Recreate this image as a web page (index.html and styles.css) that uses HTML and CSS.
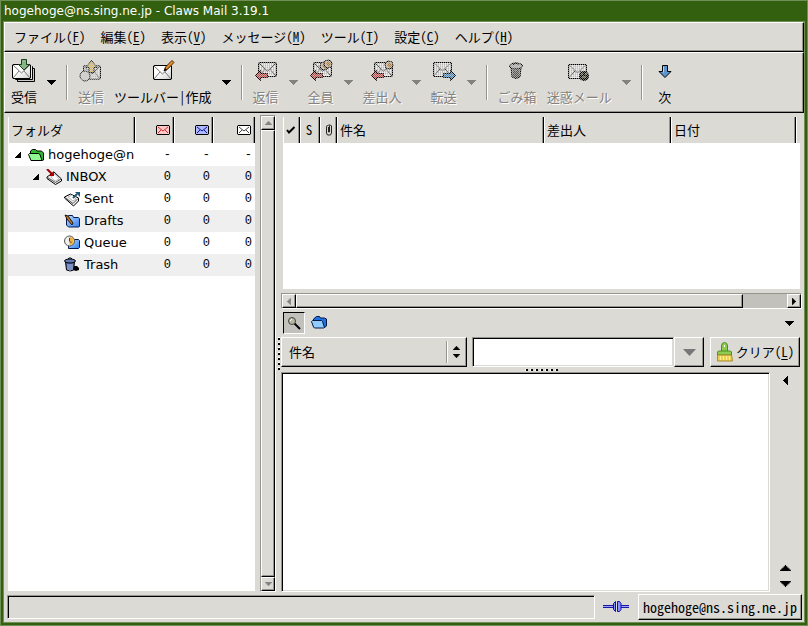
FILE: index.html
```
<!DOCTYPE html>
<html lang="ja">
<head>
    <meta charset="UTF-8">
    <meta name="viewport" content="width=device-width, initial-scale=1.0">
    <title>Claws Mail 3.19.1</title>
    <link rel="stylesheet" href="styles.css">
</head>
<body>
    <!-- shared icons -->
    <svg class="defs" aria-hidden="true">
        <defs>
            <pattern id="dots" width="2" height="2" patternUnits="userSpaceOnUse">
                <rect width="1" height="1" fill="#dcdad5"/><rect x="1" y="1" width="1" height="1" fill="#dcdad5"/>
            </pattern>
            <linearGradient id="paper" x2="1" y2="1"><stop offset=".4" stop-color="#fff"/><stop offset="1" stop-color="#ccc"/></linearGradient>
            <linearGradient id="blue" x2="1" y2="1"><stop offset="0" stop-color="#b8dcff"/><stop offset="1" stop-color="#3080f0"/></linearGradient>
        </defs>
        <symbol id="down" viewBox="0 0 9 5"><path d="M0 0h9v1h-1v1h-1v1h-1v1h-1v1h-1v-1h-1v-1h-1v-1h-1v-1h-1z" fill="currentColor"/></symbol>
        <symbol id="left" viewBox="0 0 5 9"><path d="M5 0v9h-1v-1h-1v-1h-1v-1h-1v-1h-1v-1h1v-1h1v-1h1v-1h1v-1z" fill="currentColor"/></symbol>
        <symbol id="envelope" viewBox="0 0 19 15">
            <path d="M1 .5h17l.5.5v13l-.5.5h-17l-.5-.5v-13z" fill="url(#paper)" stroke="#000"/>
            <path d="M1 1l8.500 8 8.500-8M1 14l6-7M18 14l-6-7" fill="none" stroke="#777"/>
        </symbol>
        <symbol id="envelope-off" viewBox="0 0 19 15">
            <path d="M1 .5h17l.5.5v13l-.5.5h-17l-.5-.5v-13z" fill="#eee" stroke="#000"/>
            <path d="M1 1l8.500 8 8.500-8M1 14l6-7M18 14l-6-7" fill="none" stroke="#333"/>
            <path d="M1 2h17M1 4h17M1 6h17M1 8h17M1 10h17M1 12h17" stroke="#888" stroke-dasharray="1 1"/>
        </symbol>
        <symbol id="mini" viewBox="0 0 14 10">
            <path d="M1 .5h12l.5.5v8l-.5.5h-12l-.5-.5v-8z" fill="currentColor" stroke="#000"/>
            <path d="M2 2l5 4 5-4M2 8l3-3M12 8l-3-3" fill="none" stroke="var(--line)"/>
        </symbol>
        <symbol id="expand" viewBox="0 0 6 6"><path d="M5 0h1v6h-6v-1h1v-1h1v-1h1v-1h1v-1h1z"/></symbol>
        <symbol id="person" viewBox="0 0 10 10">
            <circle cx="5" cy="5" r="4" fill="#c8b8a8" stroke="#000"/><path d="M3 5l2-3 3 3-2 3z" fill="#b07838"/>
        </symbol>
        <symbol id="reply" viewBox="0 0 13 11">
            <path d="M.5 5.500l5-5v3h7v4h-7v3z" fill="#b85050" stroke="#200"/>
        </symbol>
    </svg>

    <div class="window">
        <div class="titlebar">hogehoge@ns.sing.ne.jp - Claws Mail 3.19.1</div>
        <div class="client">
            <nav class="menubar">
                <button>ファイル(<u>F</u>)</button>
                <button>編集(<u>E</u>)</button>
                <button>表示(<u>V</u>)</button>
                <button>メッセージ(<u>M</u>)</button>
                <button>ツール(<u>T</u>)</button>
                <button>設定(<u>C</u>)</button>
                <button>ヘルプ(<u>H</u>)</button>
            </nav>

            <div class="toolbar">
                <button class="tool">
                    <svg viewBox="0 0 24 24">
                        <path d="M8 9.500h14.500v13h-17v-3" fill="#ccc" stroke="#000"/>
                        <path d="M20 7.500h.500v13h-17v-2" fill="#eee" stroke="#000"/>
                        <use href="#envelope" x="0" y="5" width="19" height="15"/>
                        <path d="M9.500.500h5v5h3l-5.500 5.500-5.500-5.500h3z" fill="#86b586" stroke="#1c3c1c"/>
                    </svg>受信
                </button>
                <button class="arrow" aria-label="受信メニュー"><svg><use href="#down"/></svg></button>
                <span class="sep"></span>
                <button class="tool" disabled>
                    <svg viewBox="0 0 24 24">
                        <use href="#envelope-off" x="4" y="6" width="18" height="15"/>
                        <circle cx="6" cy="17" r="5" fill="#ccc" stroke="#222"/>
                        <path d="M7 8.500l5.500-7 5.500 7h-3v5h-5v-5z" fill="#d0b870" stroke="#222"/>
                        <rect class="fade" width="24" height="24" fill="url(#dots)"/>
                    </svg>送信
                </button>
                <button class="tool">
                    <svg viewBox="0 0 24 24">
                        <use href="#envelope" x="2" y="6" width="19" height="15"/>
                        <path d="M13 12l1.500-4 6.500-6.500 2 2-6.500 6.500z" fill="#e09030" stroke="#4a2400"/>
                        <path d="M13 12l3-1-2-2z" fill="#000"/>
                    </svg>ツールバー|作成
                </button>
                <button class="arrow" aria-label="作成メニュー"><svg><use href="#down"/></svg></button>
                <span class="sep"></span>
                <button class="tool" disabled>
                    <svg viewBox="0 0 24 24">
                        <use href="#envelope-off" x="4" y="3" width="19" height="15"/>
                        <use href="#reply" x="1" y="11" width="13" height="11"/>
                        <rect class="fade" width="24" height="24" fill="url(#dots)"/>
                    </svg>返信
                </button>
                <button class="arrow" aria-label="返信メニュー" disabled><svg><use href="#down"/></svg></button>
                <button class="tool" disabled>
                    <svg viewBox="0 0 24 24">
                        <use href="#envelope-off" x="4" y="3" width="19" height="15"/>
                        <use href="#person" x="10" y="2" width="10" height="10"/>
                        <use href="#person" x="14" y="0" width="10" height="10"/>
                        <use href="#reply" x="1" y="11" width="13" height="11"/>
                        <rect class="fade" width="24" height="24" fill="url(#dots)"/>
                    </svg>全員
                </button>
                <button class="arrow" aria-label="全員メニュー" disabled><svg><use href="#down"/></svg></button>
                <button class="tool" disabled>
                    <svg viewBox="0 0 24 24">
                        <use href="#envelope-off" x="4" y="3" width="19" height="15"/>
                        <use href="#person" x="14" y="1" width="10" height="10"/>
                        <use href="#reply" x="1" y="11" width="13" height="11"/>
                        <rect class="fade" width="24" height="24" fill="url(#dots)"/>
                    </svg>差出人
                </button>
                <button class="arrow" aria-label="差出人メニュー" disabled><svg><use href="#down"/></svg></button>
                <button class="tool" disabled>
                    <svg viewBox="0 0 24 24">
                        <use href="#envelope-off" x="1" y="3" width="19" height="15"/>
                        <path d="M23.500 16.500l-5-5v3h-7v4h7v3z" fill="#5088b8" stroke="#012"/>
                        <rect class="fade" width="24" height="24" fill="url(#dots)"/>
                    </svg>転送
                </button>
                <button class="arrow" aria-label="転送メニュー" disabled><svg><use href="#down"/></svg></button>
                <span class="sep"></span>
                <button class="tool" disabled>
                    <svg viewBox="0 0 24 24">
                        <path d="M6 8l1 10q4 3 8 0l1-10z" fill="#888" stroke="#000"/>
                        <path d="M9 11v7M11 12v7M13 11v7" stroke="#222"/>
                        <ellipse cx="11" cy="7" rx="6.500" ry="3" fill="#aaa" stroke="#000"/>
                        <path d="M8 5.500q3-3 6 0" fill="none" stroke="#000"/>
                        <rect class="fade" width="24" height="24" fill="url(#dots)"/>
                    </svg>ごみ箱
                </button>
                <button class="tool" disabled>
                    <svg viewBox="0 0 24 24">
                        <use href="#envelope-off" x="1" y="5" width="19" height="15"/>
                        <circle cx="17" cy="17" r="5" fill="#000"/>
                        <path d="M14 15h2M18 15h2M15 18h4" stroke="#bb6"/>
                        <rect class="fade" width="24" height="24" fill="url(#dots)"/>
                    </svg>迷惑メール
                </button>
                <button class="arrow" aria-label="迷惑メールメニュー" disabled><svg><use href="#down"/></svg></button>
                <span class="sep"></span>
                <button class="tool">
                    <svg viewBox="0 0 24 24">
                        <path d="M9.500 6.500h5v6h3.500l-6 6-6-6h3.500z" fill="#5c94cc" stroke="#000"/>
                        <path d="M10.500 7.500v6" stroke="#b4d4f0"/>
                    </svg>次
                </button>
            </div>

            <main class="panes">
                <section class="folders">
                    <div class="folder-list">
                        <table>
                            <colgroup><col><col class="count"><col class="count"><col class="total"></colgroup>
                            <thead>
                                <tr>
                                    <th>フォルダ</th>
                                    <th><svg class="mini new"><use href="#mini"/></svg></th>
                                    <th><svg class="mini unread"><use href="#mini"/></svg></th>
                                    <th><svg class="mini all"><use href="#mini"/></svg></th>
                                </tr>
                            </thead>
                            <tbody>
                                <tr>
                                    <td><div class="node">
                                        <svg class="expander"><use href="#expand"/></svg>
                                        <svg class="icon" viewBox="0 0 16 16"><path d="M2.500 7v-3l2-1.500h3l1.500 1.500h4.500l2 2v7l-1 .5h-11z" fill="#30b830" stroke="#000"/><path d="M.500 7.500l1-1h9l1.500 1 2 6h-11z" fill="#90f890" stroke="#000"/></svg>
                                        <span>hogehoge@n</span></div></td>
                                    <td>-</td><td>-</td><td>-</td>
                                </tr>
                                <tr>
                                    <td><div class="node level1">
                                        <svg class="expander"><use href="#expand"/></svg>
                                        <svg class="icon" viewBox="0 0 16 16"><path d="M1 8l7-5 7.500 7v2l-6 3.500-8.500-6z" fill="#eee" stroke="#000"/><path d="M1.500 8.500l8 5 5.500-3.500" fill="none" stroke="#555"/><path d="M5 8l4-3 4 5-4 2z" fill="#fff" stroke="#bbb"/><path d="M1 0l5 5" stroke="#a00000" stroke-width="2"/><path d="M8 2v5h-5z" fill="#b00000"/></svg>
                                        <span>INBOX</span></div></td>
                                    <td>0</td><td>0</td><td>0</td>
                                </tr>
                                <tr>
                                    <td><div class="node level2">
                                        <svg class="icon" viewBox="0 0 16 16"><path d="M.500 6l6-3 8 4v3l-5 5-9-8z" fill="#eee" stroke="#000"/><path d="M1 6.500l8 6 5-5" fill="none" stroke="#555"/><path d="M4 6l4-2 4 4-3 2z" fill="#fff" stroke="#bbb"/><path d="M9 7l4-4" stroke="#205878" stroke-width="2"/><path d="M11 1h5v5z" fill="#205878"/></svg>
                                        <span>Sent</span></div></td>
                                    <td>0</td><td>0</td><td>0</td>
                                </tr>
                                <tr>
                                    <td><div class="node level2">
                                        <svg class="icon" viewBox="0 0 16 16"><path d="M2.500 4.500l2-2h4l1 2h5l1 1v8l-1 .5h-10l-2-2z" fill="url(#blue)" stroke="#001850"/><path d="M1 2l3 1 5 7-1 2-5-6z" fill="#c87830" stroke="#201000"/></svg>
                                        <span>Drafts</span></div></td>
                                    <td>0</td><td>0</td><td>0</td>
                                </tr>
                                <tr>
                                    <td><div class="node level2">
                                        <svg class="icon" viewBox="0 0 16 16"><path d="M4.500 4.500h10l1 1v7l-1 1h-10z" fill="url(#blue)" stroke="#001850"/><circle cx="5.500" cy="6" r="5" fill="#eee" stroke="#555"/><path d="M5.500 2a4 4 0 0 1 0 8z" fill="#f0b040"/><path d="M5.500 3v3l2 2" fill="none" stroke="#444"/></svg>
                                        <span>Queue</span></div></td>
                                    <td>0</td><td>0</td><td>0</td>
                                </tr>
                                <tr>
                                    <td><div class="node level2">
                                        <svg class="icon" viewBox="0 0 16 16"><path d="M9 13l1-4h3l2 2v2l-3 1z"/><path d="M1.500 5l1 8q4 2 7 0l1-8z" fill="#5068a8" stroke="#000"/><path d="M4 7v6M6 7v7M8 7v6" stroke="#a8b8e0"/><ellipse cx="6" cy="4" rx="5.500" ry="2" fill="#6078b0" stroke="#000"/><path d="M4 2l1-1h2l1 1" fill="none" stroke="#000"/></svg>
                                        <span>Trash</span></div></td>
                                    <td>0</td><td>0</td><td>0</td>
                                </tr>
                            </tbody>
                        </table>
                    </div>
                    <div class="scrollbar vertical">
                        <button aria-label="上へ" disabled><svg class="up"><use href="#down"/></svg></button>
                        <div class="thumb"></div>
                        <button aria-label="下へ" disabled><svg><use href="#down"/></svg></button>
                    </div>
                </section>

                <div class="grip"></div>

                <section class="messages">
                    <div class="message-list">
                        <table>
                            <colgroup><col class="mark"><col class="status"><col class="attach"><col><col class="from"><col class="date"><col class="rest"></colgroup>
                            <thead>
                                <tr>
                                    <th><svg class="glyph" viewBox="0 0 10 10"><path d="M1 5l2 2.500 5.500-5.500" fill="none" stroke="#000" stroke-width="2"/></svg></th>
                                    <th class="center">S</th>
                                    <th><svg class="glyph clip" viewBox="0 0 8 12"><path d="M3.500 3v5h1v-6l-1-1h2l1 1v7l-1 2h-3l-1-2v-6l1-2" fill="none" stroke="#222"/></svg></th>
                                    <th>件名</th>
                                    <th>差出人</th>
                                    <th>日付</th>
                                    <th class="end"></th>
                                </tr>
                            </thead>
                        </table>
                    </div>
                    <div class="scrollbar horizontal">
                        <button aria-label="左へ" disabled><svg class="side"><use href="#left"/></svg></button>
                        <div class="thumb"></div>
                        <div class="trough"></div>
                        <button aria-label="右へ"><svg class="side flip"><use href="#left"/></svg></button>
                    </div>

                    <div class="viewbar">
                        <button class="toggle" aria-label="検索">
                            <svg class="icon" viewBox="0 0 16 16"><path d="M8 8l6 6" stroke="#000" stroke-width="2"/><circle cx="6" cy="6" r="3.500" fill="#b8b8a0" stroke="#444"/><path d="M4 6l2-2" stroke="#fff"/></svg>
                        </button>
                        <button class="plain" aria-label="フォルダ">
                            <svg class="icon" viewBox="0 0 16 16"><path d="M2.500 6v-2l3-2.500h3l1 1.500h4l2 1v7l-2 1.500h-9z" fill="#2070e0" stroke="#001840"/><path d="M.500 6.500l1-1h9l1 1 2 6-1 .5h-9l-1-1z" fill="#90ccff" stroke="#001840"/></svg>
                        </button>
                        <button class="plain more" aria-label="メニュー"><svg><use href="#down"/></svg></button>
                    </div>

                    <form class="search">
                        <div class="field">
                            <select aria-label="検索対象"><option>件名</option><option>差出人</option></select>
                            <span class="spin"><svg class="up small"><use href="#down"/></svg><svg class="small"><use href="#down"/></svg></span>
                        </div>
                        <input type="text" aria-label="検索文字列">
                        <button type="button" class="drop" aria-label="履歴" disabled><svg viewBox="0 0 13 7"><path d="M0 0h13l-6.500 7z" fill="#777"/></svg></button>
                        <button type="reset" class="clear">
                            <svg viewBox="0 0 18 20"><path d="M5.500 10v-6q0-3.500 3-3.500t3 3.500v6" fill="#8ccc50" stroke="#508c20"/><path d="M8 3h1v2h-1z" fill="#fff"/><path d="M1.500 13v-3l1-1h12l1 1v3z" fill="#8ccc50" stroke="#508c20"/><path d="M1.500 13h14l1 6h-15z" fill="#ecd050" stroke="#a88c30"/><path d="M4.500 14v4M7.500 14v4M10.500 14v4M13.500 14v4" stroke="#fff098"/></svg>
                            <span>クリア(<u>L</u>)</span>
                        </button>
                    </form>

                    <div class="grip-h"></div>

                    <div class="preview">
                        <textarea aria-label="本文" readonly></textarea>
                        <div class="steps">
                            <button class="plain" aria-label="パネル"><svg class="side"><use href="#left"/></svg></button>
                            <button class="plain prev" aria-label="前"><svg class="up big"><use href="#down"/></svg></button>
                            <button class="plain" aria-label="次"><svg class="big"><use href="#down"/></svg></button>
                        </div>
                    </div>
                </section>
            </main>

            <footer class="statusbar">
                <div class="message"></div>
                <svg class="plug" viewBox="0 0 26 11"><path d="M0 5.500h10M18 5.500h8" stroke="#1818a0" stroke-width="3"/><path d="M0 5.500h10M18 5.500h8" stroke="#a0a0ff"/><path d="M10.500 2.500l2-2v10l-2-2zM14.500.500h2l1.500 2v6l-1.500 2h-2z" fill="#8890ff" stroke="#1010a0"/></svg>
                <button class="account">hogehoge@ns.sing.ne.jp</button>
            </footer>
        </div>
    </div>
</body>
</html>
```
FILE: styles.css
```
* {
    box-sizing: border-box;
}

body {
    margin: 0;
    font-family: "Noto Sans CJK JP", sans-serif;
    font-feature-settings: "hwid";
    font-size: 13px;
    line-height: 20px;
    color: #000;
}

button, select, input, textarea {
    font: inherit;
    font-feature-settings: inherit;
    color: inherit;
    margin: 0;
    padding: 0;
    border: none;
    border-radius: 0;
    background: none;
    outline: none;
}

u {
    text-underline-offset: 2px;
}

svg {
    display: block;
    flex: none;
    width: 9px;
    height: 5px;
}

.defs {
    position: absolute;
    width: 0;
    height: 0;
}

.up {
    transform: rotate(180deg);
}

/* window frame */
.window {
    display: flex;
    flex-direction: column;
    min-height: 100vh;
    padding: 0 2px 2px;
    border: 1px solid #6f8f57;
    background-color: #33600e;
}

.titlebar {
    height: 20px;
    padding-left: 1px;
    font-family: "DejaVu Sans", sans-serif;
    font-size: 12px;
    color: #fff;
}

.client {
    flex: 1;
    display: flex;
    flex-direction: column;
    border: 1px solid #6f8f57;
    background-color: #dcdad5;
}

.menubar, .toolbar {
    display: flex;
    border-style: solid;
    border-width: 1px;
    border-color: #fff #000 #000 #fff;
    box-shadow: inset -1px -1px #96948f;
    padding: 0 1px;
}

.menubar {
    height: 30px;
}

.menubar button {
    padding: 0 7px 0 8px;
    white-space: nowrap;
}

.toolbar {
    height: 61px;
    align-items: center;
}

.tool {
    display: flex;
    flex-direction: column;
    align-items: center;
    gap: 4px;
    padding: 0 5px;
    white-space: nowrap;
}

.tool svg {
    width: 24px;
    height: 24px;
}

.tool:disabled, .arrow:disabled {
    color: #84827e;
    text-shadow: 1px 1px #fff;
}

.fade {
    opacity: .6;
}

.arrow {
    display: flex;
    justify-content: center;
    width: 19px;
}

.sep {
    width: 2px;
    height: 35px;
    margin: 0 5px;
    border-left: 1px solid #96948f;
    border-right: 1px solid #fff;
}

/* main area */
.panes {
    flex: 1;
    display: flex;
    min-height: 0;
    padding: 2px 2px 1px 4px;
}

.folders {
    display: flex;
    gap: 5px;
    width: 268px;
}

.folder-list {
    flex: 1;
    margin: 2px 0 1px;
    background-color: #fff;
}

table {
    width: 100%;
    table-layout: fixed;
    border-collapse: separate;
    border-spacing: 0;
}

th {
    height: 26px;
    padding: 0 3px 0 2px;
    font-weight: normal;
    text-align: left;
    white-space: nowrap;
    background-color: #dcdad5;
    border-left: 1px solid #fff;
    border-right: 1px solid #000;
    box-shadow: inset -1px 0 #96948f;
}

.count {
    width: 39px;
}

.total {
    width: 42px;
}

td {
    height: 22px;
    padding: 0 3px 0 0;
    line-height: 22px;
    text-align: right;
    font-family: "Liberation Mono", monospace;
    font-size: 12px;
}

tbody tr:nth-child(even) {
    background-color: #efefef;
}

tbody tr:first-child td {
    border-top: 1px solid #fff;
    height: 23px;
}

.node {
    display: flex;
    align-items: center;
    gap: 4px;
    padding-left: 7px;
    overflow: hidden;
    font-family: "DejaVu Sans", sans-serif;
    font-size: 13px;
    white-space: nowrap;
}

td:first-child {
    padding: 0;
}

.level1 {
    padding-left: 25px;
}

.level2 {
    padding-left: 56px;
}

.expander {
    width: 6px;
    height: 6px;
    margin-right: 3px;
}

.icon {
    width: 16px;
    height: 16px;
}

.mini {
    width: 14px;
    height: 10px;
    margin-left: auto;
}

.new {
    color: #ffc8c8;
    --line: #d03030;
}

.unread {
    color: #b0b8ff;
    --line: #101890;
}

.all {
    color: #fff;
    --line: #444;
}

.scrollbar {
    display: flex;
    border-style: solid;
    border-width: 1px;
    border-color: #96948f #fff #fff #96948f;
    background-color: #c3c1bc;
}

.scrollbar button, .thumb {
    display: flex;
    align-items: center;
    justify-content: center;
    background-color: #dcdad5;
    border-style: solid;
    border-width: 1px;
    border-color: #fff #000 #000 #fff;
    box-shadow: inset -1px -1px #96948f;
}

.scrollbar button:disabled {
    color: #84827e;
}

.vertical {
    flex-direction: column;
    width: 16px;
}

.vertical button {
    height: 14px;
}

.vertical svg {
    width: 7px;
    height: 4px;
}

.horizontal {
    height: 16px;
    margin-top: 4px;
}

.horizontal button {
    width: 14px;
}

.vertical .thumb {
    flex: 1;
}

.horizontal .thumb {
    flex: 91;
}

.trough {
    flex: 9;
}

.side {
    width: 5px;
    height: 9px;
}

.horizontal .side {
    width: 4px;
    height: 7px;
}

.flip {
    transform: rotate(180deg);
}

/* pane handles */
.grip {
    align-self: center;
    width: 2px;
    height: 34px;
    margin: 0 1px 0 2px;
    background: repeating-linear-gradient(#fff 0 1px, #000 1px 3px, #dcdad5 3px 5px);
}

.grip-h {
    align-self: center;
    width: 34px;
    height: 2px;
    margin: 2px 0 1px;
    background: repeating-linear-gradient(90deg, #fff 0 1px, #000 1px 3px, #dcdad5 3px 5px);
}

/* message list */
.messages {
    flex: 1;
    display: flex;
    flex-direction: column;
    min-width: 0;
    padding-top: 2px;
}

.message-list {
    flex: 44 1 0;
    margin: 0 2px;
    background-color: #fff;
}

.mark, .attach {
    width: 17px;
}

.status {
    width: 20px;
}

.from {
    width: 127px;
}

.date {
    width: 125px;
}

.rest {
    width: 4px;
}

.message-list th {
    padding: 0 2px;
}

.message-list .center {
    padding: 0 2px 0 0;
    text-align: center;
}

.message-list .end {
    border-right: none;
    box-shadow: none;
    padding: 0;
}

.glyph {
    width: 10px;
    height: 10px;
}

.glyph.clip {
    width: 8px;
    height: 12px;
    margin: 0 auto;
}

.viewbar {
    display: flex;
    align-items: center;
    gap: 6px;
    height: 22px;
    margin: 3px 2px;
}

.toggle {
    width: 22px;
    height: 22px;
    padding: 2px;
    border-style: solid;
    border-width: 1px;
    border-color: #000 #fff #fff #000;
    background-color: #c3c1bc;
}

.more {
    margin-left: auto;
    padding-right: 6px;
}

.search {
    display: flex;
    height: 30px;
    margin-right: 2px;
}

.field {
    position: relative;
    width: 186px;
    margin-right: 5px;
}

.search select, .drop, .clear, .account {
    border-style: solid;
    border-width: 1px;
    border-color: #fff #000 #000 #fff;
    box-shadow: inset -1px -1px #96948f;
}

.search select {
    width: 100%;
    height: 30px;
    padding-left: 7px;
    appearance: none;
}

.spin {
    position: absolute;
    top: 4px;
    right: 7px;
    display: flex;
    flex-direction: column;
    justify-content: center;
    gap: 4px;
    height: 22px;
    padding-left: 6px;
    border-left: 1px solid #96948f;
    box-shadow: inset 1px 0 #fff;
    pointer-events: none;
}

.small {
    width: 7px;
    height: 4px;
}

.search input {
    flex: 1;
    min-width: 0;
    padding: 0 4px;
    background-color: #fff;
    border-style: solid;
    border-width: 1px;
    border-color: #96948f #dcdad5 #fff #96948f;
    box-shadow: inset 1px 1px #000, inset -1px -1px #dcdad5;
}

.drop {
    display: flex;
    align-items: center;
    justify-content: center;
    width: 30px;
    margin-right: 6px;
}

.drop svg {
    width: 13px;
    height: 7px;
}

.clear {
    display: flex;
    align-items: center;
    justify-content: center;
    gap: 2px;
    width: 90px;
    white-space: nowrap;
}

.clear svg {
    width: 18px;
    height: 20px;
}

.preview {
    flex: 56 1 0;
    display: flex;
}

.preview textarea {
    flex: 1;
    resize: none;
    background-color: #fff;
    border-style: solid;
    border-width: 1px;
    border-color: #96948f #fff #fff #96948f;
    box-shadow: inset 1px 1px #000, inset -1px -1px #dcdad5;
}

.steps {
    display: flex;
    flex-direction: column;
    align-items: center;
    gap: 10px;
    width: 32px;
    padding: 4px 1px 5px 0;
}

.prev {
    margin-top: auto;
}

.big {
    width: 11px;
    height: 6px;
}

/* status bar */
.statusbar {
    display: flex;
    align-items: center;
    height: 29px;
    padding: 0 2px 2px 3px;
}

.message {
    flex: 1;
    height: 24px;
    border-style: solid;
    border-width: 1px;
    border-color: #96948f #fff #fff #96948f;
    box-shadow: inset 1px 1px #000;
}

.plug {
    width: 26px;
    height: 11px;
    margin: 0 9px 0 8px;
}

.account {
    width: 164px;
    height: 26px;
    font-size: 14px;
}
```
